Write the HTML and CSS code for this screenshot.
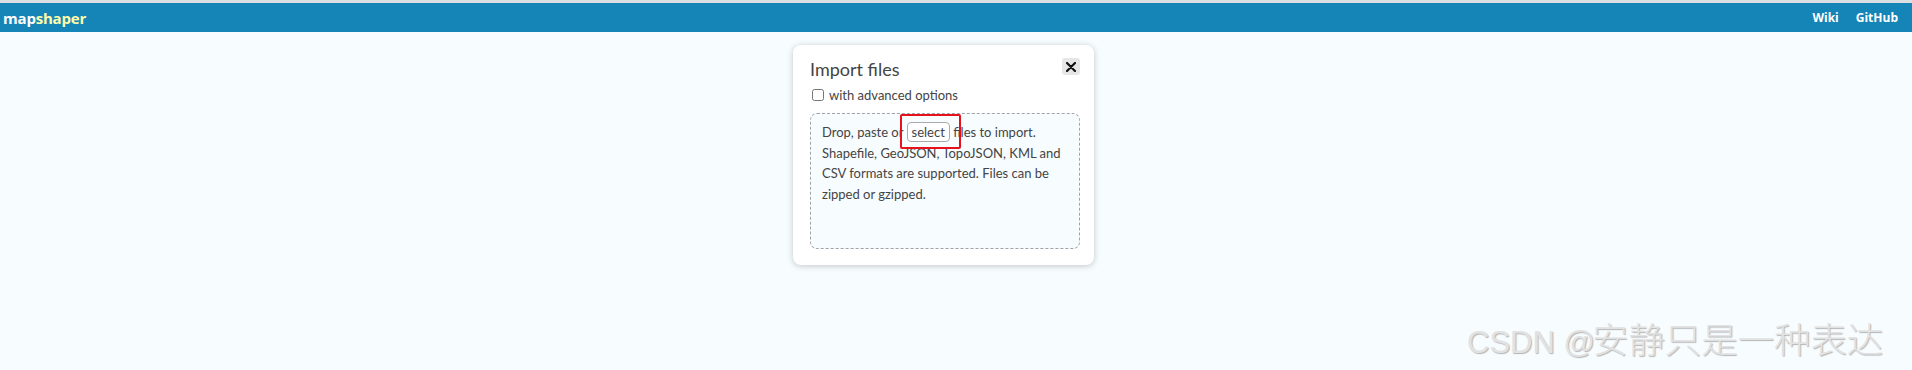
FILE: index.html
```html
<!DOCTYPE html>
<html lang="en">
<head>
    <meta charset="UTF-8">
    <title>mapshaper</title>
    <link rel="stylesheet" href="styles.css">
</head>
<body>

<div class="topStrip"></div>
<div class="header">
    <div class="logo">map<span class="logoShaper">shaper</span></div>
    <div class="links">
        <a href="#">Wiki</a>
        <a href="#">GitHub</a>
    </div>
</div>

<div class="main">
    <div class="importDialog">
        <div class="dialogTop">
            <h3 class="dialogTitle">Import files</h3>
            <button class="closeBtn">
                <svg width="10" height="10" viewBox="0 0 10 10"><path d="M1 1L9 9M9 1L1 9" stroke="#111" stroke-width="2.2" stroke-linecap="round"/></svg>
            </button>
        </div>
        <label class="advanced"><input type="checkbox"> with advanced options</label>
        <div class="dropZone">
            <p>Drop, paste or <span class="selectWrap"><span class="selectBtn">select</span><span class="mark"></span></span> files to import. Shapefile, GeoJSON, TopoJSON, KML and CSV formats are supported. Files can be zipped or gzipped.</p>
        </div>
    </div>
</div>

<div class="watermark">CSDN @<span class="wmName">安静只是一种表达</span></div>

</body>
</html>
```

FILE: styles.css
```css
body {
    margin: 0;
    padding: 0;
    background: #f7fcff;
    font-family: Lato, "Open Sans", sans-serif;
    height: 370px;
    overflow: hidden;
    position: relative;
}

.topStrip {
    height: 3px;
    background: #dcdfe2;
}

/* Header bar */
.header {
    height: 29px;
    background: #1585b8;
    display: flex;
    align-items: center;
    justify-content: space-between;
    padding: 0 14px 0 3px;
}

.logo {
    color: #fff;
    font-family: "Open Sans", sans-serif;
    font-weight: 700;
    font-size: 15px;
    letter-spacing: -0.2px;
}

.logoShaper {
    color: #ffffa8;
}

.links {
    display: flex;
    gap: 17px;
}

.links a {
    color: #fff;
    font-family: "Open Sans", sans-serif;
    font-weight: 700;
    font-size: 12px;
    text-decoration: none;
}

/* Import dialog */
.main {
    display: flex;
    justify-content: center;
    padding-top: 13px;
    padding-right: 25px;
}

.importDialog {
    width: 301px;
    height: 220px;
    box-sizing: border-box;
    background: #fff;
    border-radius: 8px;
    box-shadow: 0 1px 6px rgba(0, 0, 0, 0.22);
    padding: 12px 14px 0 17px;
}

.dialogTop {
    display: flex;
    justify-content: space-between;
    align-items: flex-start;
}

.dialogTitle {
    margin: 0;
    font-weight: 400;
    font-size: 18px;
    color: #444;
    line-height: 22px;
    padding-top: 1px;
}

.closeBtn {
    width: 18px;
    height: 17px;
    border: none;
    border-radius: 3px;
    background: #e6e6e6;
    padding: 0;
    margin-top: 1px;
    display: flex;
    align-items: center;
    justify-content: center;
}

.advanced {
    display: flex;
    align-items: center;
    gap: 5px;
    margin-top: 7px;
    font-size: 13px;
    color: #444;
}

.advanced input {
    width: 12px;
    height: 12px;
    margin: 0 0 0 2px;
}

.dropZone {
    margin-top: 10px;
    height: 136px;
    box-sizing: border-box;
    border: 1px dashed #a0a4a8;
    border-radius: 7px;
    background: #f7fcff;
    padding: 8px 11px;
}

.dropZone p {
    margin: 0;
    font-size: 13px;
    line-height: 20.7px;
    color: #444;
}

.selectWrap {
    position: relative;
}

.selectBtn {
    border: 1px solid #aaa;
    border-radius: 4px;
    padding: 1px 4px;
    background: #fff;
}

/* red highlight mark over the button */
.mark {
    position: absolute;
    left: -7px;
    top: -10px;
    width: 57px;
    height: 31px;
    border: 2px solid #e8101a;
    border-radius: 2px;
}

/* CSDN watermark */
.watermark {
    position: absolute;
    left: 1467px;
    top: 320px;
    font-family: "Liberation Sans", "Noto Sans CJK SC", sans-serif;
    font-size: 31px;
    line-height: 1;
    color: #e2e2e2;
    text-shadow: 1px 1px 1px #b4b4b4;
    white-space: nowrap;
}

.wmName {
    display: inline-block;
    font-family: "Noto Sans CJK SC", sans-serif;
    font-size: 35px;
    font-weight: 300;
    transform: scaleX(1.04);
    transform-origin: left center;
    margin-left: -3px;
}
```
